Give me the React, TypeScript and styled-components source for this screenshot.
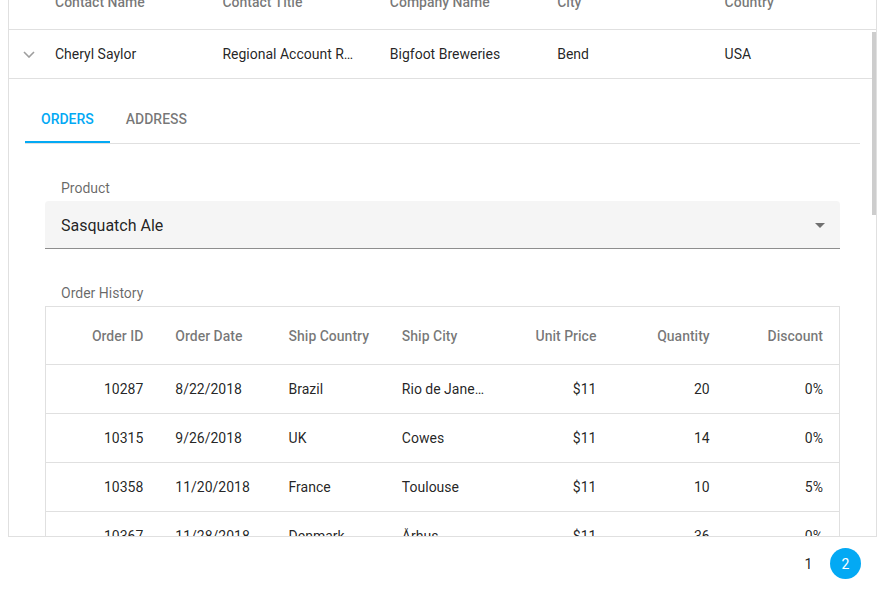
import React from 'react';
import styled, { createGlobalStyle } from 'styled-components';

const GlobalStyle = createGlobalStyle`
  html, body { padding: 0; background: #fff; }
  body {
    margin: 0 8px;
    font-family: Roboto, "Liberation Sans", Arial, sans-serif;
    color: rgba(0, 0, 0, 0.87);
  }
  * { box-sizing: border-box; }
`;

const Grid = styled.div`
  border: 1px solid #e0e0e0;
  border-top: none;
`;

const HeaderRow = styled.div`
  display: grid;
  grid-template-columns: 30px repeat(5, 1fr);
  height: 30px;
  border-bottom: 1px solid #e0e0e0;
  overflow: hidden;
`;

const HeaderCell = styled.div`
  display: flex;
  align-items: flex-end;
  padding: 0 16px 19px;
  font-size: 14px;
  line-height: 16px;
  font-weight: 500;
  color: rgba(0, 0, 0, 0.54);
  white-space: nowrap;
  overflow: hidden;
`;

const Body = styled.div`
  position: relative;
  height: 506px;
  overflow: hidden;
`;

const Thumb = styled.div`
  position: absolute;
  top: 2px;
  right: 0;
  width: 4px;
  height: 183px;
  background: #cdcdcd;
`;

const DataRow = styled.div`
  display: grid;
  grid-template-columns: 30px repeat(5, 1fr);
  align-items: center;
  height: 49px;
  border-bottom: 1px solid #e0e0e0;
  font-size: 14px;
`;

const ExpandCell = styled.div`
  display: flex;
  align-items: center;
  padding-left: 14px;
`;

const DataCell = styled.div`
  padding: 0 16px;
  white-space: nowrap;
  overflow: hidden;
  text-overflow: ellipsis;
`;

const Detail = styled.div`
  padding: 16px 16px 0;
`;

const TabBar = styled.div`
  display: flex;
  height: 49px;
  border-bottom: 1px solid #e0e0e0;
`;

const Tab = styled.div<{ $active?: boolean }>`
  display: flex;
  align-items: center;
  height: 48px;
  padding: 2px 16px 0;
  font-size: 14px;
  font-weight: 500;
  text-transform: uppercase;
  color: ${(p) => (p.$active ? '#03a9f4' : 'rgba(0, 0, 0, 0.54)')};
  border-bottom: 2px solid ${(p) => (p.$active ? '#03a9f4' : 'transparent')};
`;

const Form = styled.div`
  padding: 36px 20px 0;
`;

const Field = styled.div`
  & + & {
    margin-top: 36px;
  }
`;

const FieldLabel = styled.div`
  padding-left: 16px;
  margin-bottom: 4px;
  font-size: 14px;
  line-height: 17px;
  color: rgba(0, 0, 0, 0.6);
`;

const Select = styled.div`
  display: flex;
  align-items: center;
  justify-content: space-between;
  height: 48px;
  padding: 1px 15px 0 16px;
  background: #f5f5f5;
  border-radius: 4px 4px 0 0;
  border-bottom: 1px solid rgba(0, 0, 0, 0.42);
  font-size: 16px;
  color: rgba(0, 0, 0, 0.87);
`;

const OrderTable = styled.div`
  border: 1px solid #e0e0e0;
`;

const TableHead = styled.div`
  display: grid;
  grid-template-columns: repeat(7, 1fr);
  align-items: center;
  height: 58px;
  border-bottom: 1px solid #e0e0e0;
`;

const TableRow = styled.div`
  display: grid;
  grid-template-columns: repeat(7, 1fr);
  align-items: center;
  height: 49px;
  border-bottom: 1px solid #e0e0e0;
`;

const TH = styled.div<{ $right?: boolean }>`
  padding: 0 16px;
  font-size: 14px;
  font-weight: 500;
  color: rgba(0, 0, 0, 0.54);
  text-align: ${(p) => (p.$right ? 'right' : 'left')};
  white-space: nowrap;
  overflow: hidden;
  text-overflow: ellipsis;
`;

const TD = styled.div<{ $right?: boolean }>`
  padding: ${(p) => (p.$right ? '0 16px' : '0 12px 0 16px')};
  font-size: 14px;
  color: rgba(0, 0, 0, 0.87);
  text-align: ${(p) => (p.$right ? 'right' : 'left')};
  white-space: nowrap;
  overflow: hidden;
  text-overflow: ellipsis;
`;

const Pager = styled.div`
  display: flex;
  justify-content: flex-end;
  gap: 6px;
  padding: 11px 16px 0 0;
`;

const PageButton = styled.div<{ $active?: boolean }>`
  display: flex;
  align-items: center;
  justify-content: center;
  width: 31px;
  height: 31px;
  border-radius: 50%;
  font-size: 14px;
  background: ${(p) => (p.$active ? '#03a9f4' : 'transparent')};
  color: ${(p) => (p.$active ? '#fff' : 'rgba(0, 0, 0, 0.87)')};
`;

const columns = ['Contact Name', 'Contact Title', 'Company Name', 'City', 'Country'];
const customer = ['Cheryl Saylor', 'Regional Account Representative', 'Bigfoot Breweries', 'Bend', 'USA'];

const orderCols: { title: string; right?: boolean }[] = [
  { title: 'Order ID', right: true },
  { title: 'Order Date' },
  { title: 'Ship Country' },
  { title: 'Ship City' },
  { title: 'Unit Price', right: true },
  { title: 'Quantity', right: true },
  { title: 'Discount', right: true },
];

const orders = [
  ['10287', '8/22/2018', 'Brazil', 'Rio de Janeiro', '$11', '20', '0%'],
  ['10315', '9/26/2018', 'UK', 'Cowes', '$11', '14', '0%'],
  ['10358', '11/20/2018', 'France', 'Toulouse', '$11', '10', '5%'],
  ['10367', '11/28/2018', 'Denmark', 'Århus', '$11', '36', '0%'],
  ['10385', '12/17/2018', 'USA', 'Eugene', '$11', '8', '0%'],
];

const Chevron = () => (
  <svg width="12" height="7" viewBox="0 0 12 7" fill="none">
    <polyline points="1,1 6,6 11,1" stroke="#9e9e9e" strokeWidth="1.6" />
  </svg>
);

const DropArrow = () => (
  <svg width="10" height="5" viewBox="0 0 10 5">
    <polygon points="0,0 10,0 5,5" fill="rgba(0,0,0,0.54)" />
  </svg>
);

export default function App() {
  return (
    <>
      <GlobalStyle />
      <Grid>
        <HeaderRow>
          <HeaderCell />
          {columns.map((c) => (
            <HeaderCell key={c}>{c}</HeaderCell>
          ))}
        </HeaderRow>
        <Body>
          <DataRow>
            <ExpandCell>
              <Chevron />
            </ExpandCell>
            {customer.map((v) => (
              <DataCell key={v}>{v}</DataCell>
            ))}
          </DataRow>
          <Detail>
            <TabBar>
              <Tab $active>Orders</Tab>
              <Tab>Address</Tab>
            </TabBar>
            <Form>
              <Field>
                <FieldLabel>Product</FieldLabel>
                <Select>
                  <span>Sasquatch Ale</span>
                  <DropArrow />
                </Select>
              </Field>
              <Field>
                <FieldLabel>Order History</FieldLabel>
                <OrderTable>
                  <TableHead>
                    {orderCols.map((c) => (
                      <TH key={c.title} $right={c.right}>
                        {c.title}
                      </TH>
                    ))}
                  </TableHead>
                  {orders.map((row) => (
                    <TableRow key={row[0]}>
                      {row.map((v, i) => (
                        <TD key={i} $right={orderCols[i].right}>
                          {v}
                        </TD>
                      ))}
                    </TableRow>
                  ))}
                </OrderTable>
              </Field>
            </Form>
          </Detail>
          <Thumb />
        </Body>
      </Grid>
      <Pager>
        <PageButton>1</PageButton>
        <PageButton $active>2</PageButton>
      </Pager>
    </>
  );
}
